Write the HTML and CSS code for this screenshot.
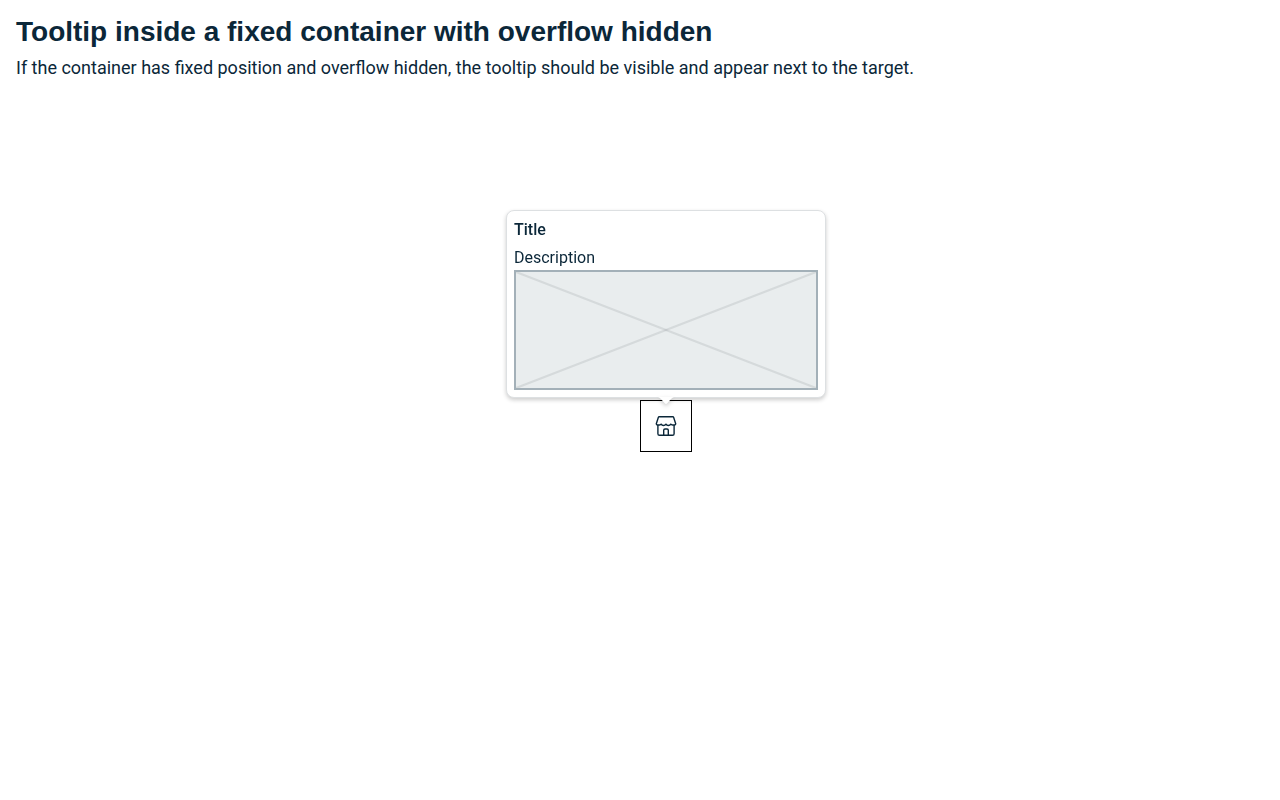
FILE: index.html
```html
<!DOCTYPE html>
<html lang="en">
<head>
<meta charset="utf-8">
<meta name="viewport" content="width=device-width, initial-scale=1">
<title>Tooltip inside a fixed container with overflow hidden</title>
<link rel="stylesheet" href="styles.css">
</head>
<body>
<main class="page">
  <h1 class="heading">Tooltip inside a fixed container with overflow hidden</h1>
  <p class="intro">If the container has fixed position and overflow hidden, the tooltip should be visible and appear next to the target.</p>
</main>
<div class="anchor">
  <div class="target" tabindex="0" aria-describedby="tip">
    <svg class="icon" viewBox="0 0 24 24" role="img" aria-label="Shop">
      <path d="M5.2 2.700h13.600q0.600 0 0.800 0.600L21.700 9.800q0 1-1 1.200h-2.200q-1.200 0-1.700-0.800q-0.900 1.300-2.500 1.300t-2.300-1.300q-0.900 1.300-2.500 1.300t-2.300-1.300q-0.500 0.800-1.700 0.800h-2.200q-1-0.200-1-1.200L4.400 3.300q0.200-0.600 0.800-0.600zM3.900 11v8.700q0 1.600 1.600 1.600h13q1.600 0 1.600-1.600V11M9.700 21v-4.700q0-1.300 1.300-1.300h2q1.300 0 1.300 1.300V21"/>
    </svg>
  </div>
  <div class="tooltip" role="tooltip" id="tip">
    <strong class="tooltip-title">Title</strong>
    <span class="tooltip-text">Description</span>
    <svg class="placeholder" viewBox="0 0 304 120" preserveAspectRatio="none" aria-hidden="true">
      <path class="cross" d="M2 2L302 118"/>
      <path class="cross" d="M302 2L2 118"/>
      <rect class="frame" x="1" y="1" width="302" height="118"/>
    </svg>
    <svg class="arrow" viewBox="0 0 16 8" aria-hidden="true"><path d="M0 0h16q-1.500 0.500-3 2L9.200 6.300q-1.200 1.200-2.400 0L3 2Q1.500 0.500 0 0z"/></svg>
  </div>
</div>
</body>
</html>
```
FILE: styles.css
```css
body {
  margin: 0;
  background: #fff;
  color: #0b2739;
  font-family: Roboto, "Liberation Sans", sans-serif;
}

.page {
  display: flex;
  flex-direction: column;
  gap: 8px;
  padding: 16px;
}

.heading {
  margin: 0;
  font: bold 28px/32px "Liberation Sans", Arial, sans-serif;
}

.intro {
  margin: 0;
  font-size: 18px;
  line-height: 24px;
}

.anchor {
  position: fixed;
  top: 50%;
  left: 50%;
}

.target {
  padding: 13px;
  border: 1px solid #000;
}

.icon {
  display: block;
  width: 24px;
  height: 24px;
  fill: none;
  stroke: #0b2739;
  stroke-width: 1.4;
  stroke-linejoin: round;
}

.tooltip {
  position: absolute;
  bottom: calc(100% + 2px);
  left: 50%;
  transform: translateX(-50%);
  display: flex;
  flex-direction: column;
  padding: 7px;
  border: 1px solid #dde0e2;
  border-radius: 8px;
  background: #fff;
  box-shadow: 0 2px 4px rgba(0, 0, 0, 0.2);
  font-size: 16px;
  line-height: 24px;
}

.tooltip-title {
  margin-bottom: 4px;
  font-weight: 500;
}

.placeholder {
  display: block;
  width: 304px;
  height: 120px;
  background: #e9edee;
  fill: none;
  stroke-width: 2;
}

.cross {
  stroke: rgba(110, 120, 125, 0.16);
}

.frame {
  stroke: #a3b0b8;
}

.arrow {
  position: absolute;
  top: 100%;
  left: 50%;
  width: 16px;
  height: 8px;
  overflow: visible;
  transform: translateX(-50%);
  fill: #fff;
  filter: drop-shadow(0 2px 2px rgba(0, 0, 0, 0.2));
}
```
